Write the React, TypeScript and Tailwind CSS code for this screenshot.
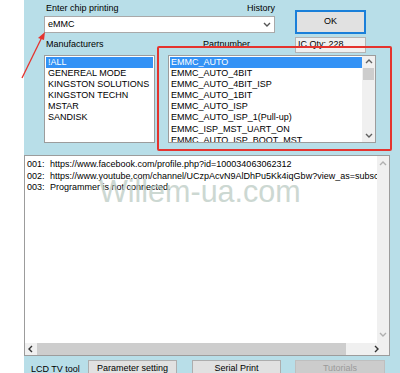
import React from 'react';

const manufacturers = ['!ALL', 'GENEREAL MODE', 'KINGSTON SOLUTIONS', 'KINGSTON TECHN', 'MSTAR', 'SANDISK'];

const parts = [
  'EMMC_AUTO',
  'EMMC_AUTO_4BIT',
  'EMMC_AUTO_4BIT_ISP',
  'EMMC_AUTO_1BIT',
  'EMMC_AUTO_ISP',
  'EMMC_AUTO_ISP_1(Pull-up)',
  'EMMC_ISP_MST_UART_ON',
  'EMMC_AUTO_ISP_BOOT_MST',
];

const log = [
  ['001:', 'https://www.facebook.com/profile.php?id=100034063062312'],
  ['002:', 'https://www.youtube.com/channel/UCzpAcvN9AlDhPu5Kk4iqGbw?view_as=subscriber'],
  ['003:', 'Programmer is not connected.'],
];

// small chevron used by the fake win32 scrollbars
function Chevron({ dir, color = '#606060' }: { dir: 'up' | 'down' | 'left' | 'right'; color?: string }) {
  const d = {
    up: 'M1 5 L4 2 L7 5',
    down: 'M1 2 L4 5 L7 2',
    left: 'M5 1 L2 4 L5 7',
    right: 'M2 1 L5 4 L2 7',
  }[dir];
  return (
    <svg width="8" height="8" viewBox="0 0 8 8">
      <path d={d} fill="none" stroke={color} strokeWidth="1.4" />
    </svg>
  );
}

function ListItem({ text, selected }: { text: string; selected?: boolean }) {
  return (
    <div
      className={
        'h-[11.1px] leading-[11.1px] pl-[2px] whitespace-nowrap ' +
        (selected ? 'bg-[#3392f5] text-white' : 'text-black')
      }
    >
      {text}
    </div>
  );
}

function WinButton({ label, width, disabled }: { label: string; width: string; disabled?: boolean }) {
  return (
    <div
      className={
        'h-[20px] flex items-start justify-center pt-[1px] border ' +
        width +
        (disabled ? ' bg-[#cccccc] border-[#bfbfbf] text-[#9a9a9a]' : ' bg-[#e1e1e1] border-[#adadad] text-black')
      }
    >
      {label}
    </div>
  );
}

export default function App() {
  return (
    <div
      className="relative w-[400px] h-[373px] overflow-hidden flex bg-white text-[9px] text-black"
      style={{ fontFamily: '"Liberation Sans", Arial, sans-serif' }}
    >
      {/* white strip on the left */}
      <div className="w-[24px] shrink-0 bg-white" />

      {/* main blue panel */}
      <div className="flex-1 bg-[#b8dee8] overflow-hidden">
        {/* chip printing + OK */}
        <div className="flex items-start ml-[20px] pt-[2px]">
          <div className="w-[231px]">
            <div className="h-[14px] flex justify-between items-center pl-[2px]">
              <span>Enter chip printing</span>
              <span>History</span>
            </div>
            <div className="h-[17px] bg-white border border-[#a9a9a9] flex items-center justify-between pl-[3px] pr-[3px]">
              <span>eMMC</span>
              <Chevron dir="down" color="#555" />
            </div>
          </div>
          <div className="ml-[20px] mt-[8px] w-[71px] h-[24px] bg-[#e1e1e1] border-2 border-[#1a7fd9] flex items-center justify-center">
            OK
          </div>
        </div>

        {/* labels row */}
        <div className="flex items-center ml-[20px] mt-[3px] h-[16px]">
          <span className="ml-[2px] w-[157px]">Manufacturers</span>
          <span className="w-[92px]">Partnumber</span>
          <div className="w-[71px] h-[16px] bg-[#f0f0f0] border border-[#b4b4b4] flex items-center pl-[2px]">
            IC Qty: 228
          </div>
        </div>

        {/* lists */}
        <div className="flex ml-[20px] mt-[2px] h-[88px]">
          <div className="w-[111px] h-[88px] bg-white border border-[#9c9c9c] p-[1px]">
            {manufacturers.map((m, i) => (
              <ListItem key={m} text={m} selected={i === 0} />
            ))}
          </div>
          <div className="ml-[13px] w-[208px] h-[88px] bg-white border border-[#9c9c9c] flex">
            <div className="flex-1 overflow-hidden pt-[1px] pl-[1px]">
              {parts.map((p, i) => (
                <div
                  key={p}
                  className={
                    'h-[11.1px] leading-[11.1px] pl-[1px] whitespace-nowrap ' +
                    (i === 0 ? 'bg-[#3392f5] text-white' : '')
                  }
                >
                  {p}
                </div>
              ))}
            </div>
            <div className="w-[13px] bg-[#f0f0f0] flex flex-col items-center">
              <div className="h-[12px] flex items-center">
                <Chevron dir="up" />
              </div>
              <div className="w-[11px] h-[12px] bg-[#cdcdcd]" />
              <div className="flex-1" />
              <div className="h-[12px] flex items-center">
                <Chevron dir="down" />
              </div>
            </div>
          </div>
        </div>

        {/* log box */}
        <div className="relative mt-[12px] w-[366px] h-[201px] bg-white border border-[#9c9c9c] flex flex-col">
          <div className="flex-1 flex min-h-0">
            <div className="flex-1 overflow-hidden pt-[3px] pl-[2px]">
              {log.map(([n, t]) => (
                <div key={n} className="flex h-[11.6px] leading-[11.6px] whitespace-nowrap">
                  <span className="w-[23px] shrink-0">{n}</span>
                  <span>{t}</span>
                </div>
              ))}
            </div>
            <div className="w-[12px] bg-[#f0f0f0] flex flex-col items-center">
              <div className="h-[16px] flex items-center">
                <Chevron dir="up" color="#b0b0b0" />
              </div>
              <div className="flex-1" />
              <div className="h-[16px] flex items-center">
                <Chevron dir="down" color="#b0b0b0" />
              </div>
            </div>
          </div>
          <div className="h-[12px] shrink-0 flex bg-[#f0f0f0]">
            <div className="w-[12px] flex items-center justify-center">
              <Chevron dir="left" color="#333" />
            </div>
            <div className="w-[309px] bg-[#cdcdcd]" />
            <div className="flex-1" />
            <div className="w-[24px] flex items-center justify-center">
              <Chevron dir="right" color="#333" />
            </div>
          </div>

          {/* watermark */}
          <div className="absolute left-[74px] top-[20px] text-[30.5px] leading-none text-[#bccbc4] opacity-75 pointer-events-none">
            Willem-ua.com
          </div>
        </div>

        {/* bottom buttons */}
        <div className="flex items-start mt-[4px]">
          <span className="ml-[7px] mt-[3px] w-[57px]">LCD TV tool</span>
          <WinButton label="Parameter setting" width="w-[89px]" />
          <div className="w-[15px]" />
          <WinButton label="Serial Print" width="w-[89px]" />
          <div className="w-[14px]" />
          <WinButton label="Tutorials" width="w-[90px]" disabled />
        </div>
      </div>

      {/* red highlight around the part list */}
      <div className="absolute left-[157px] top-[46px] w-[235px] h-[105px] border-2 border-[#e5332e] rounded-[2px] pointer-events-none" />

      {/* red arrow pointing at the input */}
      <svg className="absolute left-0 top-0 pointer-events-none" width="60" height="90" viewBox="0 0 60 90">
        <line x1="22" y1="78" x2="43" y2="35" stroke="#e5332e" strokeWidth="1.3" />
        <path d="M45 32 L38 38 L44 40 Z" fill="#e5332e" />
      </svg>
    </div>
  );
}
